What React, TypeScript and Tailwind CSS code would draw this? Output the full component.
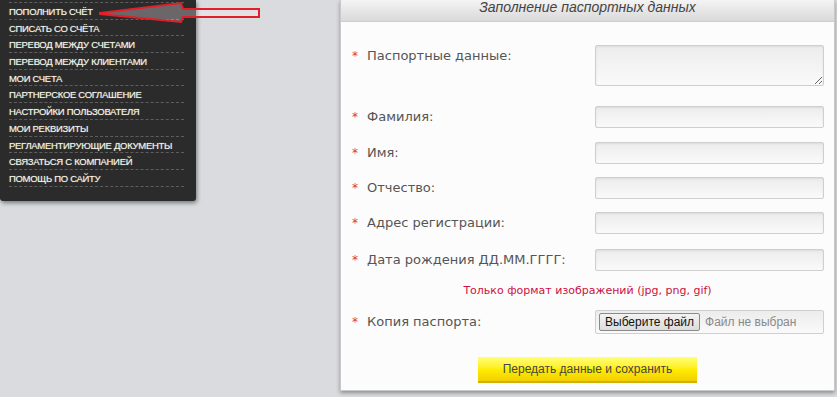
import React from 'react';

const menuItems = [
  'ПОПОЛНИТЬ СЧЁТ',
  'СПИСАТЬ СО СЧЁТА',
  'ПЕРЕВОД МЕЖДУ СЧЕТАМИ',
  'ПЕРЕВОД МЕЖДУ КЛИЕНТАМИ',
  'МОИ СЧЕТА',
  'ПАРТНЕРСКОЕ СОГЛАШЕНИЕ',
  'НАСТРОЙКИ ПОЛЬЗОВАТЕЛЯ',
  'МОИ РЕКВИЗИТЫ',
  'РЕГЛАМЕНТИРУЮЩИЕ ДОКУМЕНТЫ',
  'СВЯЗАТЬСЯ С КОМПАНИЕЙ',
  'ПОМОЩЬ ПО САЙТУ',
];

const inputClass =
  'block w-[229px] h-[22px] border border-[#cfcfcf] rounded-[2px] bg-gradient-to-b from-[#ececec] to-[#fafafa] shadow-[inset_0_1px_2px_rgba(0,0,0,0.08)] outline-none';

const Label: React.FC<{ text: string; lh?: string }> = ({ text, lh = 'leading-[22px]' }) => (
  <div className={`w-[243px] flex items-start ${lh}`}>
    <span className="w-[15px] text-[#d63a4a] text-[12px]">*</span>
    <span className="text-[13px] text-[#555]">{text}</span>
  </div>
);

export default function App() {
  return (
    <div
      className="relative w-[837px] h-[397px] overflow-hidden bg-[#d9dbde] flex items-start"
      style={{ fontFamily: '"DejaVu Sans", Verdana, sans-serif' }}
    >
      {/* Left menu */}
      <div className="w-[196px] h-[201px] bg-[#2b2b2b] rounded-b-[3px] shadow-[1px_2px_4px_rgba(0,0,0,0.45)] px-[9px] pr-[12px] overflow-hidden">
        <ul className="-mt-[14px]" style={{ fontFamily: '"Liberation Sans", Arial, sans-serif' }}>
          <li className="h-[17px] border-b border-dashed border-[#5e5e5e]" />
          {menuItems.map(item => (
            <li
              key={item}
              className="h-[16.7px] pt-[2px] border-b border-dashed border-[#5e5e5e] text-[9.5px] leading-[14px] text-[#f3f3e8] tracking-[-0.3px] [text-shadow:0_0_1px_rgba(255,255,230,0.6)]"
            >
              {item}
            </li>
          ))}
        </ul>
      </div>

      {/* Form panel */}
      <div className="ml-[144px] w-[495px] h-[391px] bg-[#fcfcfc] border border-[#c9c9c9] border-t-0 shadow-[0_2px_4px_rgba(0,0,0,0.35)]">
        <div className="h-[22px] bg-gradient-to-b from-[#f4f4f4] to-[#d9d9d9] border-b border-[#cdcdcd] text-center leading-[14px]">
          <span
            className="italic text-[14px] leading-[14px] text-[#444]"
            style={{ fontFamily: '"Liberation Sans", Arial, sans-serif' }}
          >
            Заполнение паспортных данных
          </span>
        </div>

        <div className="pl-[11px] pt-[23px]">
          <div className="flex items-start">
            <Label text="Паспортные данные:" />
            <textarea className={`${inputClass} h-[41px] resize-y`} />
          </div>
          <div className="flex items-start mt-[20px]">
            <Label text="Фамилия:" />
            <input className={inputClass} />
          </div>
          <div className="flex items-start mt-[14px]">
            <Label text="Имя:" />
            <input className={inputClass} />
          </div>
          <div className="flex items-start mt-[13px]">
            <Label text="Отчество:" />
            <input className={inputClass} />
          </div>
          <div className="flex items-start mt-[13px]">
            <Label text="Адрес регистрации:" />
            <input className={inputClass} />
          </div>
          <div className="flex items-start mt-[15px]">
            <Label text="Дата рождения ДД.ММ.ГГГГ:" />
            <input className={inputClass} />
          </div>

          <p className="mt-[12px] pr-[11px] text-center text-[11px] leading-[16px] text-[#cc1040]">
            Только формат изображений (jpg, png, gif)
          </p>

          <div className="flex items-start mt-[11px]">
            <Label text="Копия паспорта:" lh="leading-[24px]" />
            <div
              className="w-[229px] h-[24px] border border-[#cfcfcf] rounded-[2px] bg-gradient-to-b from-[#ececec] to-[#fafafa] flex items-center pl-[3px]"
              style={{ fontFamily: '"Liberation Sans", Arial, sans-serif' }}
            >
              <button className="h-[18px] px-[5px] border border-[#8a8a8a] rounded-[2px] bg-gradient-to-b from-[#f3f3f3] to-[#dcdcdc] text-[12px] leading-[16px] text-[#111]">
                Выберите файл
              </button>
              <span className="ml-[5px] text-[12px] text-[#8a8a8a]">Файл не выбран</span>
            </div>
          </div>

          <div className="mt-[23px] pr-[11px] flex justify-center">
            <button
              className="w-[219px] h-[26px] bg-gradient-to-b from-[#ffff70] via-[#ffee00] to-[#f2cf00] border-b-2 border-[#d4b000] text-[12px] text-[#444] leading-[24px]"
              style={{ fontFamily: '"Liberation Sans", Arial, sans-serif' }}
            >
              Передать данные и сохранить
            </button>
          </div>
        </div>
      </div>

      {/* Red annotation arrow */}
      <svg className="absolute left-0 top-0" width="270" height="30" viewBox="0 0 270 30">
        <polygon
          points="100,13 181,3 183,9 259,9 259,17 183,17 181,22 100,14"
          fill="rgba(255,240,245,0.3)"
          stroke="#e01f2a"
          strokeWidth="2"
          strokeLinejoin="miter"
        />
      </svg>
    </div>
  );
}
